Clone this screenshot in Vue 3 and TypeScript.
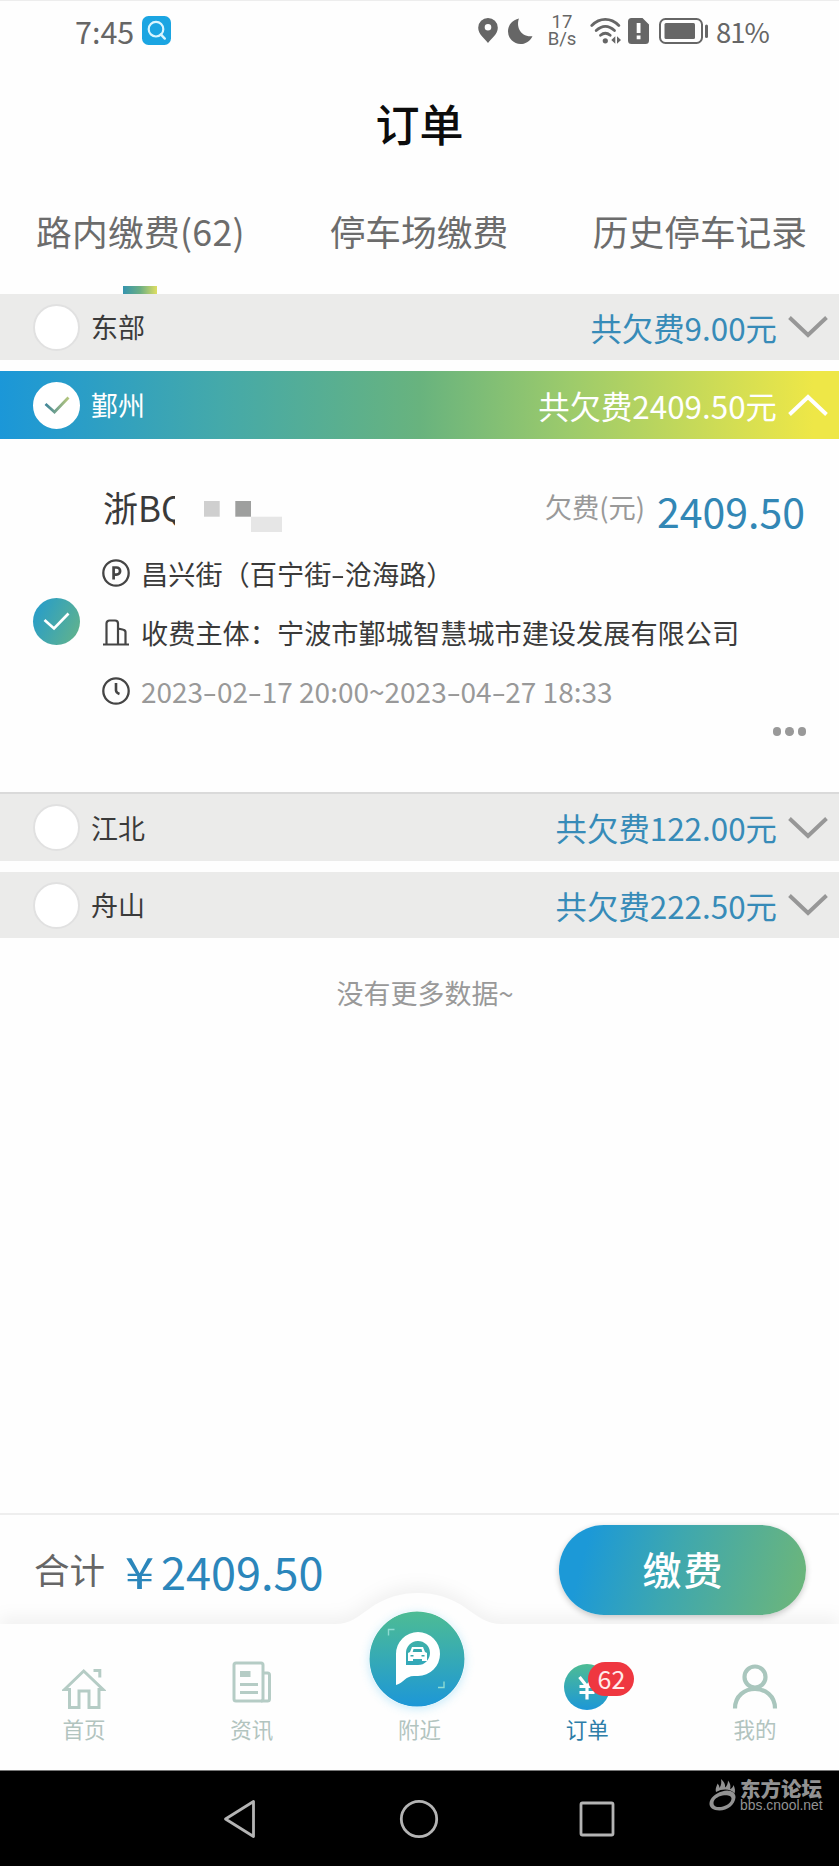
<script setup lang="ts">
interface Region {
  name: string
  amount: string
  open: boolean
}

const tabs: string[] = ['路内缴费(62)', '停车场缴费', '历史停车记录']

const regions: Region[] = [
  { name: '东部', amount: '9.00', open: false },
  { name: '鄞州', amount: '2409.50', open: true },
  { name: '江北', amount: '122.00', open: false },
  { name: '舟山', amount: '222.50', open: false },
]

const street: string[] = '昌兴街（百宁街-沧海路）'.split(/(-)/)
const period: string[] = '2023-02-17 20:00~2023-04-27 18:33'.split(/(-)/)
</script>

<template>
  <div class="screen">
    <header class="status">
      <span class="time">7:45</span>
      <svg class="search" width="29" height="29" viewBox="0 0 29 29">
        <rect width="29" height="29" rx="6.5" fill="#1ba5e2" />
        <circle cx="14" cy="13.2" r="7.3" fill="none" stroke="#d9f6ff" stroke-width="2.2" />
        <path d="M18.8 18.4l4 4.2" stroke="#d9f6ff" stroke-width="2.4" stroke-linecap="round" />
      </svg>
      <div class="status-right">
        <svg class="pin" width="20" height="25" viewBox="0 0 20 25">
          <path fill-rule="evenodd" d="M10 0a9.8 9.8 0 0 1 9.8 9.7c0 6.400-6.200 10.600-9.800 15.300C6.400 20.300.2 16.100.2 9.700A9.800 9.800 0 0 1 10 0zm0 6a3.300 3.300 0 1 0 0 6.600A3.300 3.300 0 0 0 10 6z" fill="#666" />
        </svg>
        <svg class="moon" width="25" height="26" viewBox="0 0 25 26">
          <path d="M11 .5C8 8 12 19.500 24.500 18.200C21.500 24 17 26 12.500 26A12.500 12.500 0 0 1 0 13.500C0 7 4.500 1.800 11 .5z" fill="#666" />
        </svg>
        <div class="speed"><span>17</span><span>B/s</span></div>
        <svg class="wifi" width="32" height="26" viewBox="0 0 32 26">
          <g fill="none" stroke="#666" stroke-width="2.800" stroke-linecap="round">
            <path d="M1.800 7.400C9.800-.6 20.800-.6 28.800 7.400" />
            <path d="M6.200 12.500C12 7 18.700 7 24.500 12.500" />
            <path d="M10.500 17.300C13.500 14.700 17.200 14.700 20.200 17.300" />
          </g>
          <circle cx="15.300" cy="22.800" r="2.600" fill="#666" />
          <path d="M25.300 18.300v7.400L21.300 22zM27 18.300v7.400L31 22z" fill="#666" />
        </svg>
        <svg class="sim" width="21" height="26" viewBox="0 0 21 26">
          <path d="M3.500 0H14.500L21 6.500V22.500A3.500 3.500 0 0 1 17.500 26H3.500A3.500 3.500 0 0 1 0 22.500V3.500A3.500 3.500 0 0 1 3.500 0z" fill="#666" />
          <path d="M8.700 5h3.800v10H8.700zM8.700 17.500h3.800v3.700H8.700z" fill="#fff" />
        </svg>
        <svg class="battery" width="50" height="26" viewBox="0 0 50 26">
          <rect x="1" y="1" width="42" height="24" rx="5.500" fill="none" stroke="#666" stroke-width="2" />
          <rect x="5.500" y="5" width="30.500" height="16" rx="1.500" fill="#666" />
          <path d="M47.500 8v10.500" stroke="#666" stroke-width="3" stroke-linecap="round" />
        </svg>
        <span class="percent">81%</span>
      </div>
    </header>

    <h1 class="title">订单</h1>

    <nav class="tabs">
      <span v-for="(tab, i) in tabs" :key="tab" class="tab" :class="{ active: i === 0 }">{{ tab }}</span>
    </nav>

    <main class="list">
      <section v-for="region in regions" :key="region.name" class="group" :class="{ open: region.open }">
        <div class="bar">
          <span class="radio">
            <svg v-if="region.open" width="26" height="18" viewBox="0 0 26 18">
              <defs>
                <linearGradient id="tick" x1="0" x2="1"><stop offset="0" stop-color="#40869a" /><stop offset="1" stop-color="#b5c67c" /></linearGradient>
              </defs>
              <path d="M1.500 8L10.500 16L24.500 1.500" fill="none" stroke="url(#tick)" stroke-width="2.800" />
            </svg>
          </span>
          <span class="name">{{ region.name }}</span>
          <span class="sum">共欠费{{ region.amount }}元</span>
          <svg class="chevron" width="40" height="22" viewBox="0 0 40 22">
            <path :d="region.open ? 'M1.500 20.500L20 3L38.500 20.500' : 'M1.500 1.500L20 19L38.500 1.500'" fill="none" stroke="currentColor" stroke-width="3.900" />
          </svg>
        </div>

        <div v-if="region.open" class="card">
          <span class="picked">
            <svg width="27" height="19" viewBox="0 0 27 19">
              <path d="M1.500 8L11 16.500L25.500 1.500" fill="none" stroke="#fff" stroke-width="2.700" />
            </svg>
          </span>
          <div class="detail">
            <div class="plate-row">
              <span class="plate">浙B</span><span class="cut">Q</span>
              <svg class="mosaic" width="78" height="31" viewBox="0 0 78 31">
                <rect x="0" y="0" width="15.700" height="15.700" fill="#cfcfcf" />
                <rect x="31.300" y="0" width="15.700" height="15.700" fill="#9e9f9e" />
                <rect x="47" y="15.700" width="31" height="15.300" fill="#e6e6e6" />
              </svg>
              <span class="owed">欠费(元)</span>
              <span class="price">2409.50</span>
            </div>
            <div class="info">
              <svg width="28" height="28" viewBox="0 0 28 28" fill="none" stroke="#454545">
                <circle cx="14" cy="14" r="12.700" stroke-width="2.300" />
                <path d="M11.600 20.500V8.500H14.500a3.500 3.500 0 0 1 0 7.200H11.600" stroke-width="2.700" />
              </svg>
              <span><span v-for="(part, i) in street" :key="i" :class="{ dash: part === '-' }">{{ part }}</span></span>
            </div>
            <div class="info">
              <svg width="28" height="28" viewBox="0 0 28 28" fill="none" stroke="#454545" stroke-width="2.200">
                <path d="M1 26.500H27M4.500 26V5.500a3 3 0 0 1 3-3H13a3 3 0 0 1 3 3V26M16 10.500L21.500 11.800a2.500 2.500 0 0 1 2 2.500V26" />
              </svg>
              <span>收费主体：宁波市鄞城智慧城市建设发展有限公司</span>
            </div>
            <div class="info when">
              <svg width="28" height="28" viewBox="0 0 28 28" fill="none" stroke="#454545" stroke-width="2.300">
                <circle cx="14" cy="14" r="12.700" />
                <path d="M14 6V13.500Q14.200 15.800 17.500 17" stroke-width="2.600" />
              </svg>
              <span><span v-for="(part, i) in period" :key="i" :class="{ dash: part === '-' }">{{ part }}</span></span>
            </div>
            <div class="more"><i></i><i></i><i></i></div>
          </div>
        </div>
      </section>
      <p class="end">没有更多数据~</p>
    </main>

    <div class="pay">
      <span class="total-label">合计</span>
      <span class="yen">¥</span>
      <span class="total">2409.50</span>
      <button class="pay-btn" type="button">缴费</button>
    </div>

    <footer class="tabbar">
      <svg class="tabbar-bg" width="839" height="184" viewBox="0 -38 839 184">
        <path d="M0 0H335C351 0 357-7 369-15C385-27 402-31 418-31C434-31 451-27 467-15C479-7 486 0 502 0H839V146H0z" fill="#fefefe" />
      </svg>
      <div class="item">
        <svg width="44" height="44" viewBox="0 0 44 44" fill="none" stroke="#b5ccc5" stroke-width="3">
          <path d="M2.500 23.500L21.700 5L41 23.500H37V41.500H27V25H17V41.500H7.500V23.500z" />
          <path d="M31.500 4.500H37.800V11.500" />
        </svg>
        <span>首页</span>
      </div>
      <div class="item">
        <svg class="news" width="40" height="42" viewBox="0 0 40 42" fill="none" stroke="#b5ccc5" stroke-width="3">
          <rect x="2" y="2" width="29" height="38" rx="2" />
          <path d="M31 12H35.500a2 2 0 0 1 2 2V38a2 2 0 0 1-2 2H29M8 23.500H26M8 31.500H26" />
          <path d="M8 13H18.500" stroke-width="6" />
        </svg>
        <span>资讯</span>
      </div>
      <div class="item">
        <svg class="near" width="96" height="96" viewBox="0 0 96 96">
          <defs>
            <linearGradient id="near" x1="0" y1="0" x2="0" y2="1"><stop offset="0" stop-color="#4dbc94" /><stop offset="1" stop-color="#1d97d7" /></linearGradient>
          </defs>
          <circle cx="48" cy="48" r="47.500" fill="url(#near)" />
          <path fill-rule="evenodd" d="M27 74V43A22 22 0 1 1 49 65H45C36 65 35 72 27 74zM37 54V42.500A12 12 0 1 1 49 54z" fill="#fff" />
          <path d="M43 36H54L56 41L58 42V50H53V48H44V50H39V42L41 41z" fill="#fff" />
          <path d="M44.500 38H52.500L53.300 41H43.700zM41.500 44H44.500V45.500H41.500zM52.500 44H55.500V45.500H52.500z" fill="#36a9ae" />
          <path d="M19.500 24.500V18.500H25.500M75 70.500V76.500H69" fill="none" stroke="#8edbd2" stroke-width="1.400" />
        </svg>
        <span>附近</span>
      </div>
      <div class="item current">
        <svg class="order" width="46" height="46" viewBox="0 0 46 46">
          <circle cx="23" cy="23" r="23" fill="url(#near)" />
          <path d="M15.500 13L23 22.500L30.500 13M15.500 22.500H30.500M15.500 28.500H30.500M23 22V35.500" fill="none" stroke="#fff" stroke-width="3.200" />
        </svg>
        <b class="badge">62</b>
        <span>订单</span>
      </div>
      <div class="item">
        <svg class="me" width="46" height="46" viewBox="0 0 46 46" fill="none" stroke="#a9c6bd" stroke-width="4.200">
          <circle cx="23" cy="13" r="10.500" />
          <path d="M3 44.500C3 18.500 43 18.500 43 44.500" />
        </svg>
        <span>我的</span>
      </div>
    </footer>

    <div class="system">
      <svg class="back" width="34" height="40" viewBox="0 0 34 40"><path d="M31.500 2.500V37.500L3.500 20z" /></svg>
      <svg class="home" width="40" height="40" viewBox="0 0 40 40"><circle cx="20" cy="20" r="17.700" /></svg>
      <svg class="recent" width="36" height="36" viewBox="0 0 36 36"><rect x="2" y="2" width="32" height="32" rx="1.500" /></svg>
      <div class="forum">
        <svg width="29" height="32" viewBox="0 0 29 32">
          <path fill-rule="evenodd" d="M13 12.500C20 9.500 27 13 26.500 18.500C26 25.500 18.500 31.500 10.500 31.500C4 31.500 0 28.500.5 24C1 19 6 14.500 13 12.500zM13.500 16.500C8.500 17.500 4.500 20.500 4.500 24C4.500 27.500 8 28.500 12 28C17.500 27 22.500 23.500 22.500 19.500C22.500 16.500 18 15.500 13.500 16.500z" fill="#929292" />
          <path d="M7 13C6 9 8 7 8.500 4.500C10 6 10.500 7.500 10.500 9C12.500 6 12.500 3 12 0C15 2.500 16.500 5 16 8.500C18 7 19 4 19 1.500C21.500 4.500 22 7.500 21 10C23 9.500 24 8 24.500 6C26 9 26.500 12 25.500 14.500C22 10 14 9 7 13z" fill="#929292" />
        </svg>
        <div class="forum-text"><strong>东方论坛</strong><span>bbs.cnool.net</span></div>
      </div>
    </div>
  </div>
</template>

<style>
body {
  margin: 0;
}
</style>

<style scoped>
.screen {
  display: flex;
  flex-direction: column;
  box-sizing: border-box;
  width: 839px;
  height: 1866px;
  overflow: hidden;
  border-top: 1px solid #ededed;
  background: #fefefe;
  color: #3a3a3a;
  font-family: "Noto Sans CJK SC", "Noto Sans", sans-serif;
  white-space: nowrap;
}
svg {
  display: block;
  flex: none;
}
.status {
  display: flex;
  align-items: center;
  height: 59px;
  padding: 0 69px 2px 75px;
  color: #666;
}
.time {
  width: 60px;
  font-size: 30.500px;
}
.search {
  margin-left: 7px;
}
.status-right {
  display: flex;
  align-items: center;
  margin-left: auto;
}
.pin {
  margin-left: 1px;
}
.moon {
  margin-left: 10px;
}
.speed {
  display: flex;
  flex-direction: column;
  align-items: center;
  width: 30px;
  margin-left: 14px;
  font: 18.500px/17px Roboto, sans-serif;
}
.wifi {
  margin-left: 13px;
}
.sim {
  margin-left: 6px;
}
.battery {
  margin-left: 10px;
}
.percent {
  width: 54px;
  margin-left: 7px;
  font-size: 27.500px;
  letter-spacing: -1px;
}
.title {
  margin: 0;
  height: 124px;
  color: #0c0c0c;
  font-size: 44px;
  font-weight: 500;
  line-height: 123px;
  text-align: center;
}
.tabs {
  display: flex;
  justify-content: space-between;
  height: 108px;
  padding: 0 32px 0 36px;
  color: #6c6c6c;
  font-size: 35.700px;
  line-height: 90px;
}
.tab {
  position: relative;
}
.tab.active {
  letter-spacing: 0.300px;
}
.tab.active::after {
  content: "";
  position: absolute;
  left: 87px;
  bottom: 0;
  width: 34px;
  height: 8px;
  background: linear-gradient(90deg, #3594ae, #6aae84 50%, #dede62);
}
.list {
  flex: 1;
}
.group {
  margin-bottom: 11px;
}
.group.open {
  margin-bottom: 0;
}
.bar {
  display: flex;
  align-items: center;
  height: 66px;
  padding: 0 11px 0 33px;
  background: #ebebea;
}
.open .bar {
  height: 68px;
  background: linear-gradient(90deg, #1b97d8, #44a9aa 26%, #68b37e 50%, #9dcb6b 68%, #eee747 97%);
  color: #fff;
}
.open + .group .bar {
  box-sizing: border-box;
  height: 69px;
  border-top: 2px solid #dadada;
}
.radio {
  display: flex;
  align-items: center;
  justify-content: center;
  box-sizing: border-box;
  width: 47px;
  height: 47px;
  border: 2px solid #e1e1e1;
  border-radius: 50%;
  background: #fff;
}
.open .radio {
  border-color: #fff;
}
.name {
  margin: -1px 0 0 11px;
  font-size: 27px;
}
.sum {
  margin: 0 11px 0 auto;
  color: #378bb8;
  font-size: 31.400px;
}
.open .sum {
  color: #fff;
}
.chevron {
  color: #979797;
}
.open .chevron {
  color: #fff;
}
.card {
  display: flex;
  align-items: center;
  height: 353px;
  padding: 0 33px;
}
.picked {
  display: flex;
  align-items: center;
  justify-content: center;
  width: 47px;
  height: 47px;
  margin-top: 12px;
  border-radius: 50%;
  background: linear-gradient(115deg, #229bcf, #65b488);
}
.detail {
  flex: 1;
  align-self: flex-start;
  margin-left: 22px;
  padding-top: 44px;
}
.plate-row {
  display: flex;
  align-items: center;
  height: 56px;
  margin-bottom: 4px;
}
.plate {
  margin: -10px 0 0 1px;
  font-size: 35px;
}
.cut {
  width: 14px;
  margin-top: -10px;
  overflow: hidden;
  font-size: 35px;
}
.mosaic {
  margin: 10px 0 0 29px;
}
.owed {
  margin: -10px 0 0 auto;
  color: #999;
  font-size: 27.300px;
}
.price {
  margin: -3px 1px 0 12px;
  color: #3287b5;
  font-size: 41px;
}
.info {
  display: flex;
  align-items: center;
  gap: 11px;
  height: 59px;
  font-size: 27.200px;
}
.when {
  font-size: 28px;
}
.when > span {
  color: #999;
}
.dash {
  display: inline-block;
  margin: 0 2px;
  transform: scaleX(1.500);
}
.more {
  display: flex;
  align-items: center;
  justify-content: flex-end;
  gap: 4px;
  height: 23px;
}
.more i {
  width: 8.500px;
  height: 8.500px;
  border-radius: 50%;
  background: #999;
}
.end {
  margin: 35px 0 0;
  padding-left: 11px;
  color: #999;
  font-size: 27px;
  line-height: 40px;
  text-align: center;
}
.pay {
  display: flex;
  align-items: center;
  box-sizing: border-box;
  height: 111px;
  padding: 2px 33px 0 34px;
  border-top: 2px solid #eee;
  color: #2b86bb;
}
.total-label {
  margin-top: -4px;
  color: #666;
  font-size: 35.500px;
}
.yen {
  width: 28px;
  margin: -1px 8px 0 20px;
  font-size: 43px;
  transform: scaleX(1.220);
  transform-origin: 0 50%;
}
.total {
  margin-top: -1px;
  font-size: 45px;
}
.pay-btn {
  position: relative;
  z-index: 2;
  width: 247px;
  height: 90px;
  margin: -2px 0 0 auto;
  padding: 0 0 4px 2px;
  border: 0;
  border-radius: 45px;
  background: linear-gradient(105deg, #1c99d7 12%, #3da7b0 45%, #6ab57d 95%);
  box-shadow: 0 2px 6px rgba(0, 0, 0, 0.220);
  color: #fff;
  font: 500 39px "Noto Sans CJK SC", sans-serif;
  letter-spacing: 2px;
}
.tabbar {
  position: relative;
  display: flex;
  height: 146px;
}
.tabbar-bg {
  position: absolute;
  left: 0;
  bottom: 0;
  z-index: 0;
  overflow: visible;
  clip-path: inset(-30px 0 0 0);
  filter: drop-shadow(0 -7px 8px rgba(0, 0, 0, 0.050));
}
.item {
  position: relative;
  z-index: 1;
  display: flex;
  flex: 1;
  flex-direction: column;
  align-items: center;
  justify-content: flex-end;
  padding-bottom: 26px;
  color: #b2c4bf;
  font-size: 21.500px;
  line-height: 30px;
}
.item svg {
  margin-bottom: 4px;
}
.item .news {
  margin-bottom: 11px;
}
.item .near {
  margin: 0 4px 7px 0;
  border-radius: 50%;
  box-shadow: 0 2px 10px rgba(70, 190, 240, 0.300);
}
.current {
  color: #2d7da8;
}
.badge {
  position: absolute;
  left: 85px;
  top: 38px;
  width: 46px;
  height: 34px;
  border-radius: 17px;
  background: #ef3740;
  color: #ffeaea;
  font-size: 25px;
  font-weight: 400;
  line-height: 32px;
  text-align: center;
}
.system {
  display: flex;
  align-items: center;
  box-sizing: border-box;
  height: 96px;
  padding-left: 222px;
  border-top: 1px solid #777;
  background: #000;
  fill: none;
  stroke: #b4b4b4;
  stroke-width: 2.800;
  stroke-linejoin: round;
}
.home {
  margin-left: 143px;
}
.recent {
  margin-left: 140px;
}
.forum {
  display: flex;
  align-self: flex-start;
  gap: 2px;
  margin: 8px 0 0 94px;
  color: #929292;
  stroke: none;
}
.forum-text {
  display: flex;
  flex-direction: column;
}
.forum-text strong {
  font-size: 20.500px;
  font-weight: 900;
  line-height: 18px;
}
.forum-text span {
  font: 13.900px/16px "Liberation Sans", sans-serif;
}
</style>
